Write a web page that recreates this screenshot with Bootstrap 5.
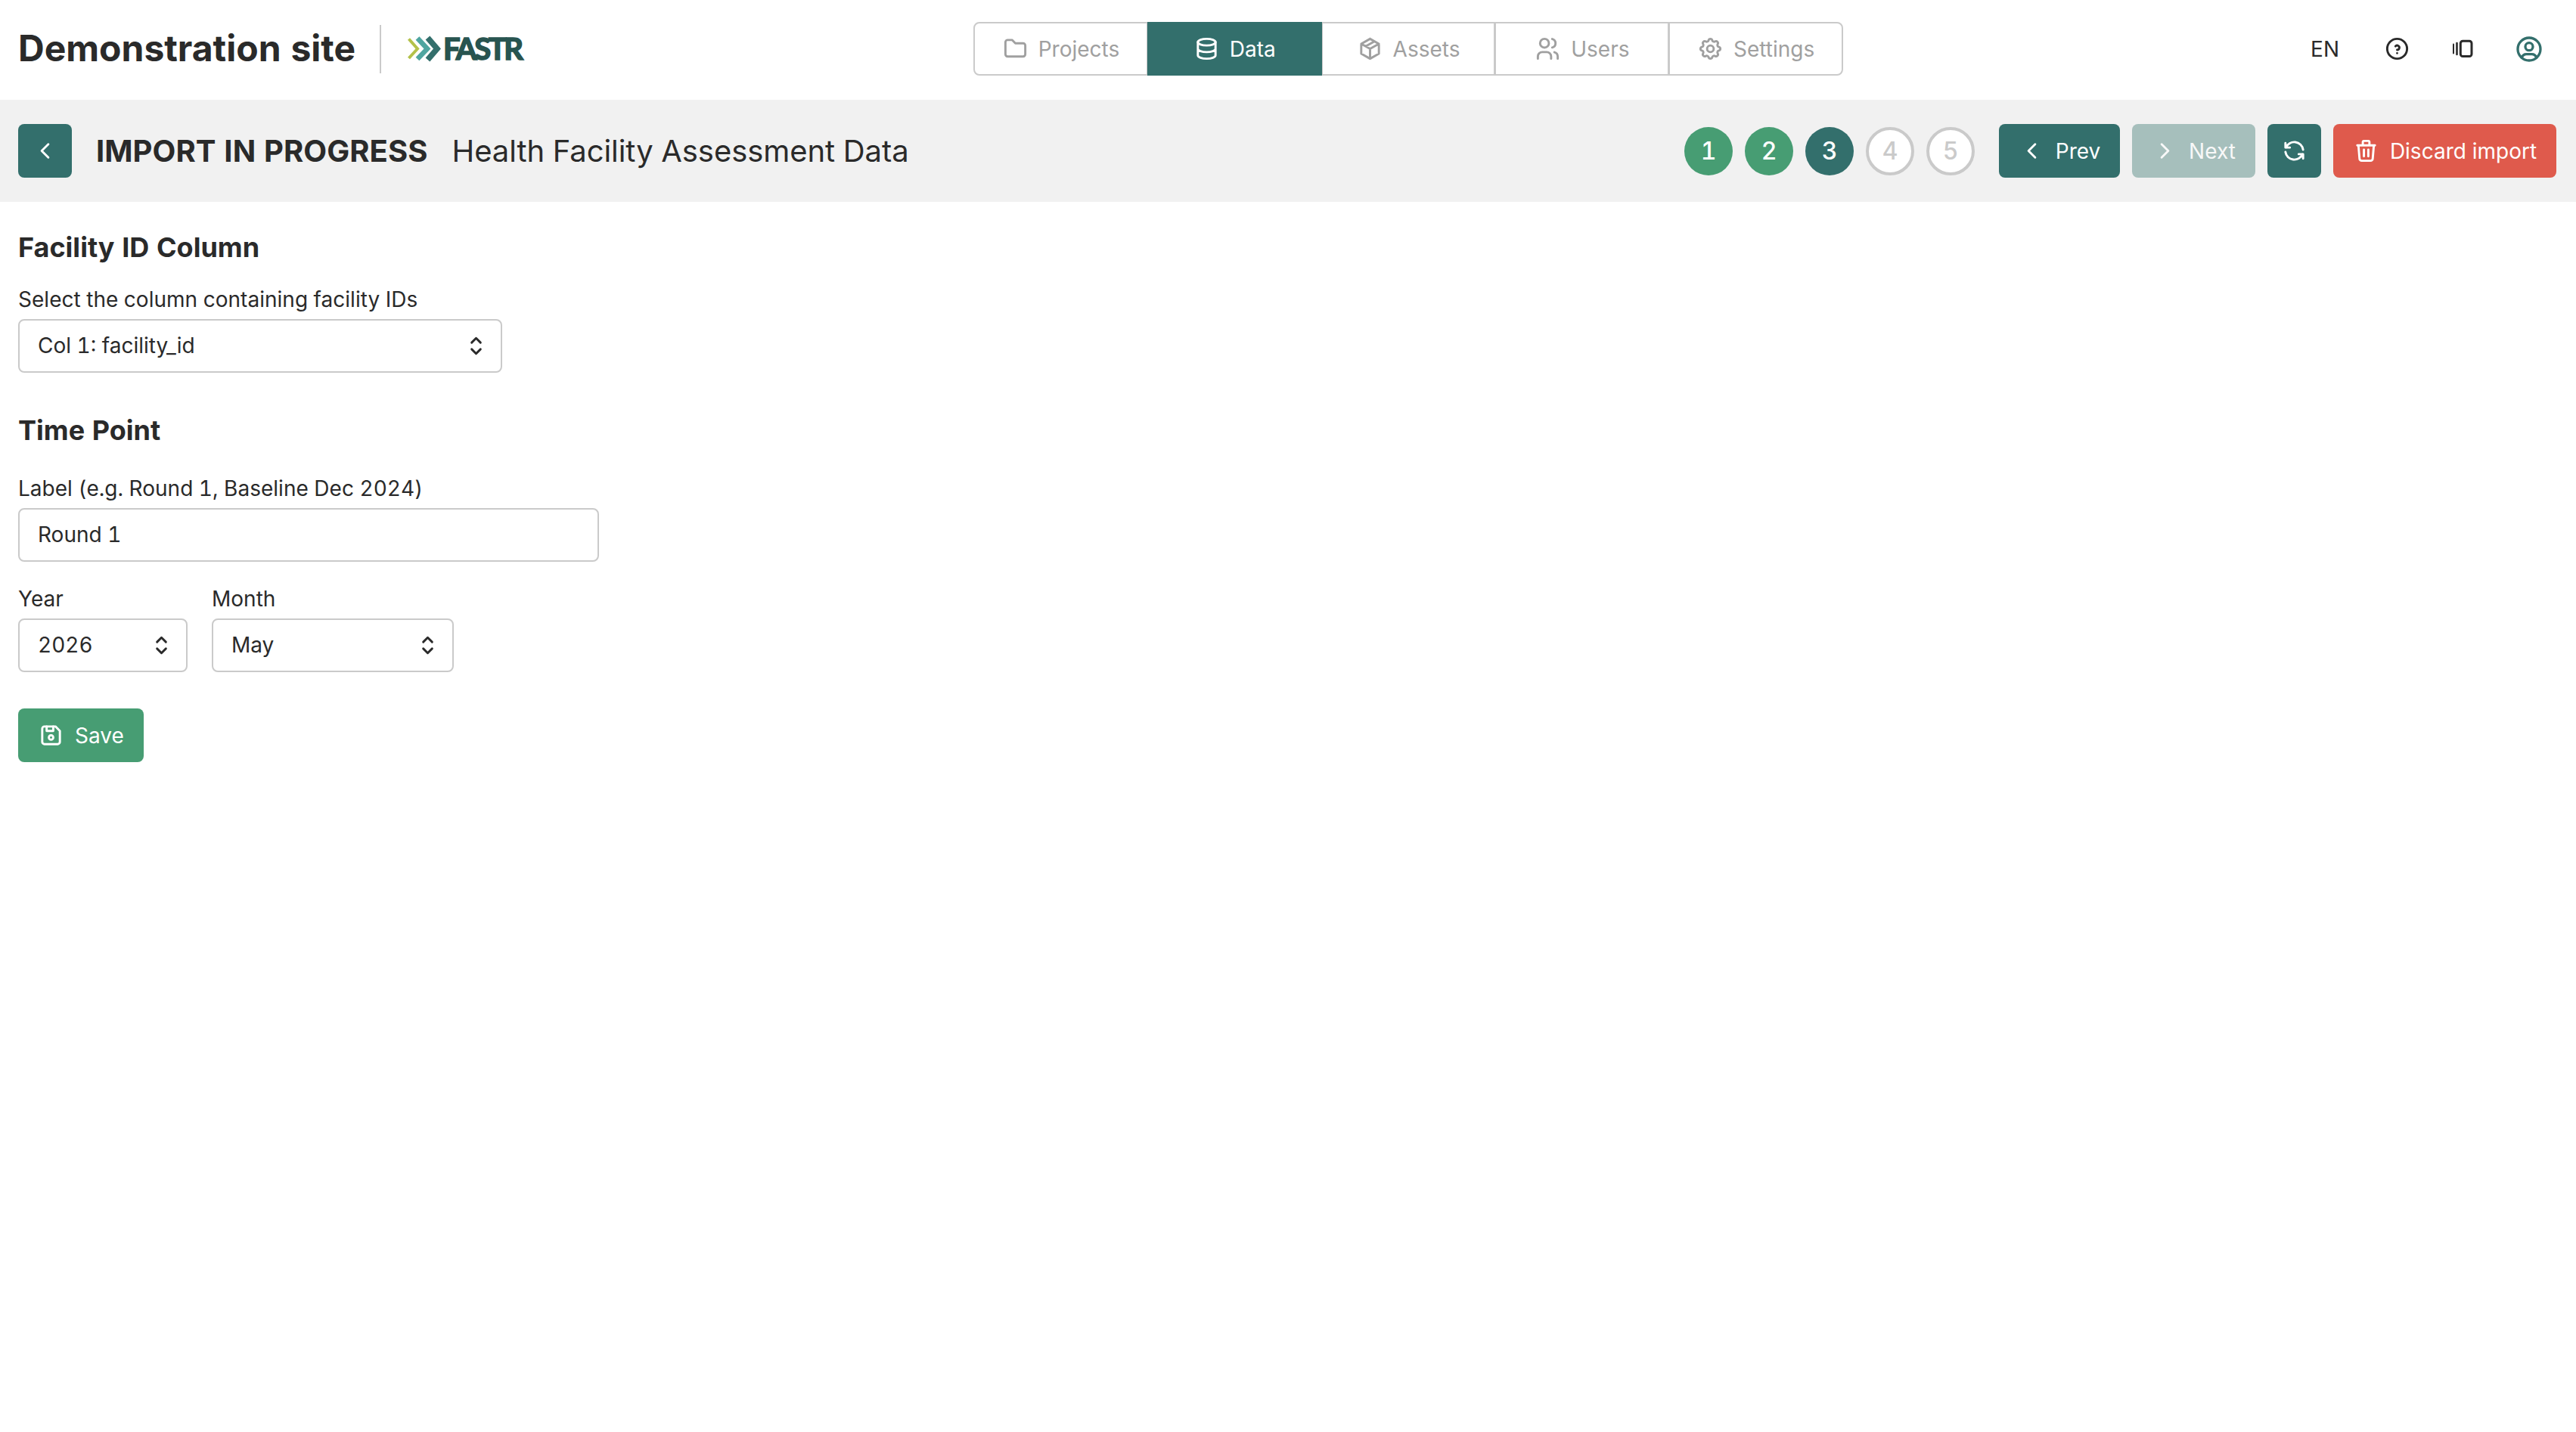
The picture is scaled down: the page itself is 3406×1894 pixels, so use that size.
<!DOCTYPE html>
<html lang="en">
<head>
<meta charset="utf-8">
<meta name="viewport" content="width=device-width, initial-scale=1">
<title>Demonstration site</title>
<link href="https://cdn.jsdelivr.net/npm/bootstrap@5.3.0/dist/css/bootstrap.min.css" rel="stylesheet">
<style>
:root{--teal:#336f6c;--green:#479d73;--red:#df5a4c;--ink:#2a2a2a;--line:#cacaca;--muted:#a0a0a0}
body{font-family:Inter,"Liberation Sans",sans-serif;font-size:28px;line-height:1.5;font-variant-numeric:tabular-nums;color:var(--ink);background:#fff}
.ico{width:35px;height:35px;fill:none;stroke:currentColor;stroke-width:2;stroke-linecap:round;stroke-linejoin:round;flex:none}
.ico-lg{width:40px;height:40px;color:var(--teal)}
.topbar{height:132px;padding:0 42px 3px 24px}
.brand-side{width:666px}
.user-side{padding-left:21px}
.user-side .ico-frames{margin:0 50px 0 52px}
.user-side .lang{margin-right:59px}
.site-name{font-size:48px;font-weight:700;line-height:60px;white-space:nowrap;padding-bottom:2px}
.rule{width:2px;height:64px;background:var(--line);margin-left:32px}
.logo{margin-left:auto;margin-right:-6px;flex:none;margin-bottom:2px}
.tabs{width:1150px;height:71px}
.tabs .btn{--bs-btn-color:var(--muted);--bs-btn-border-color:var(--line);--bs-btn-border-width:2px;--bs-btn-font-size:28px;--bs-btn-border-radius:8px;--bs-btn-active-bg:var(--teal);--bs-btn-active-border-color:var(--teal);--bs-btn-active-color:#fff;flex:1 1 0;gap:13px;padding:0}
.tabs .btn+.btn{margin-left:-2px}
.subbar{height:135px;background:#f1f1f1;padding:0 26px 0 24px}
.subbar h1{font-size:40px;font-weight:700;line-height:50px;margin:0 0 0 32px;letter-spacing:.06px}
.subbar .sub{font-size:40px;line-height:50px;margin-left:32px;letter-spacing:-.06px}
.act{height:71px;border-radius:8px;border:0;font-size:28px;color:#fff;gap:14px;padding:0;display:inline-flex;align-items:center;justify-content:center}
.act-teal{background:var(--teal)}
.act-green{background:var(--green)}
.act-red{background:var(--red)}
.act-off:disabled{background:#a6bfbc;color:#f8f8f8}
.w-sq{width:71px}.w-prev{width:160px}.w-next{width:163px}.w-disc{width:295px}.w-save{width:166px}
.steps,.acts{gap:16px}
.steps{margin-right:32px}
.step{width:64px;height:64px;border-radius:50%;font-size:32px;line-height:1;font-weight:500;color:#fff}
.step-done{background:var(--green)}
.step-now{background:var(--teal)}
.step-todo{background:#fff;border:4px solid var(--line);color:var(--line)}
.pane{padding:40px 24px}
.pane h2{font-size:36px;font-weight:700;line-height:40px;margin:0}
.lbl{line-height:40px;margin:0 0 6px;display:block;letter-spacing:.02px}
.field{height:71px;border:2px solid var(--line);border-radius:8px;font-size:28px;color:var(--ink);padding:0 15px 1px 24px;background:#fff;font-variant-numeric:inherit}
.field-col{width:640px}.field-label{width:768px}.field-year{width:224px}.field-month{width:320px}
.sec-id{margin-top:29px;margin-bottom:56px}
.sec-time{margin-top:37px}
.row-date{margin-top:29px;gap:32px}
.row-save{margin-top:48px}
</style>
</head>
<body>
<header class="topbar d-flex align-items-center justify-content-between">
  <div class="brand-side d-flex align-items-center">
    <span class="site-name">Demonstration site</span>
    <span class="rule"></span>
    <svg class="logo" width="158" height="56" viewBox="0 -10 158 56">
      <g fill="none" stroke-linejoin="miter">
        <path d="M2.5 5.5L14 18.5 2.5 31" stroke="#b3c14a" stroke-width="4"/>
        <path d="M14 4.500L27 18.500 14 32" stroke="#4fa5a0" stroke-width="6.500"/>
        <path d="M27.500 4L40 18.500 27.500 33" stroke="#336f6c" stroke-width="7.500"/>
      </g>
      <text x="48" y="33" font-size="40" font-weight="700" font-family="Lato,sans-serif" fill="#285450" stroke="#285450" stroke-width="1.600" textLength="106" lengthAdjust="spacing">FASTR</text>
    </svg>
  </div>
  <nav class="tabs btn-group">
    <button type="button" class="btn d-flex align-items-center justify-content-center"><svg class="ico" viewBox="0 0 24 24"><path d="M5 4h4l3 3h7a2 2 0 0 1 2 2v8a2 2 0 0 1-2 2H5a2 2 0 0 1-2-2V6a2 2 0 0 1 2-2"/></svg>Projects</button>
    <button type="button" class="btn active d-flex align-items-center justify-content-center"><svg class="ico" viewBox="0 0 24 24"><ellipse cx="12" cy="6" rx="8" ry="3"/><path d="M4 6v6a8 3 0 0 0 16 0V6M4 12v6a8 3 0 0 0 16 0v-6"/></svg>Data</button>
    <button type="button" class="btn d-flex align-items-center justify-content-center"><svg class="ico" viewBox="0 0 24 24"><path d="M12 3l8 4.500v9L12 21l-8-4.500v-9L12 3M12 12l8-4.500M12 12v9M12 12L4 7.500M16 5.250l-8 4.500"/></svg>Assets</button>
    <button type="button" class="btn d-flex align-items-center justify-content-center"><svg class="ico" viewBox="0 0 24 24"><circle cx="9" cy="7" r="4"/><path d="M3 21v-2a4 4 0 0 1 4-4h4a4 4 0 0 1 4 4v2M16 3.130a4 4 0 0 1 0 7.750M21 21v-2a4 4 0 0 0-3-3.850"/></svg>Users</button>
    <button type="button" class="btn d-flex align-items-center justify-content-center"><svg class="ico" viewBox="0 0 24 24"><path d="M10.325 4.317c.426-1.756 2.924-1.756 3.35 0a1.724 1.724 0 0 0 2.573 1.066c1.543-.94 3.31.826 2.37 2.37a1.724 1.724 0 0 0 1.065 2.572c1.756.426 1.756 2.924 0 3.35a1.724 1.724 0 0 0-1.066 2.573c.94 1.543-.826 3.31-2.37 2.37a1.724 1.724 0 0 0-2.572 1.065c-.426 1.756-2.924 1.756-3.35 0a1.724 1.724 0 0 0-2.573-1.066c-1.543.94-3.31-.826-2.37-2.37a1.724 1.724 0 0 0-1.065-2.572c-1.756-.426-1.756-2.924 0-3.35a1.724 1.724 0 0 0 1.066-2.573c-.94-1.543.826-3.31 2.37-2.37 1 .608 2.296.07 2.572-1.065z"/><circle cx="12" cy="12" r="3"/></svg>Settings</button>
  </nav>
  <div class="user-side d-flex align-items-center">
    <span class="lang">EN</span>
    <svg class="ico" viewBox="0 0 24 24"><circle cx="12" cy="12" r="9"/><path d="M12 16v.01M12 13a2 2 0 0 0 .914-3.782 1.980 1.980 0 0 0-2.414.483"/></svg>
    <svg class="ico ico-frames" viewBox="0 0 35 35"><rect x="14.300" y="7.200" width="14.700" height="20.300" rx="3" stroke-width="3"/><path d="M9.500 10v15" stroke-width="2.600"/><path d="M5 11.500v12" stroke-width="2"/></svg>
    <svg class="ico ico-lg" viewBox="0 0 24 24"><circle cx="12" cy="12" r="9"/><circle cx="12" cy="10" r="3"/><path d="M6.168 18.849A4 4 0 0 1 10 16h4a4 4 0 0 1 3.834 2.855"/></svg>
  </div>
</header>

<section class="subbar d-flex align-items-center">
  <button type="button" class="act act-teal w-sq"><svg class="ico" viewBox="0 0 24 24"><path d="M15 6l-6 6 6 6"/></svg></button>
  <h1>IMPORT IN PROGRESS</h1>
  <span class="sub">Health Facility Assessment Data</span>
  <div class="steps d-flex ms-auto">
    <span class="step step-done d-flex align-items-center justify-content-center">1</span>
    <span class="step step-done d-flex align-items-center justify-content-center">2</span>
    <span class="step step-now d-flex align-items-center justify-content-center">3</span>
    <span class="step step-todo d-flex align-items-center justify-content-center">4</span>
    <span class="step step-todo d-flex align-items-center justify-content-center">5</span>
  </div>
  <div class="acts d-flex">
    <button type="button" class="act act-teal w-prev"><svg class="ico" viewBox="0 0 24 24"><path d="M15 6l-6 6 6 6"/></svg>Prev</button>
    <button type="button" class="act act-off w-next" disabled><svg class="ico" viewBox="0 0 24 24"><path d="M9 6l6 6-6 6"/></svg>Next</button>
    <button type="button" class="act act-teal w-sq"><svg class="ico" viewBox="0 0 24 24"><path d="M20 11A8.100 8.100 0 0 0 4.500 9M4 5v4h4M4 13a8.100 8.100 0 0 0 15.500 2M20 19v-4h-4"/></svg></button>
    <button type="button" class="act act-red w-disc"><svg class="ico" viewBox="0 0 24 24"><path d="M4 7h16M10 11v6M14 11v6M5 7l1 12a2 2 0 0 0 2 2h8a2 2 0 0 0 2-2l1-12M9 7V4a1 1 0 0 1 1-1h4a1 1 0 0 1 1 1v3"/></svg>Discard import</button>
  </div>
</section>

<main class="pane">
  <h2>Facility ID Column</h2>
  <div class="sec-id">
    <span class="lbl">Select the column containing facility IDs</span>
    <div class="field field-col d-flex align-items-center justify-content-between" role="combobox">Col 1: facility_id<svg class="ico" viewBox="0 0 24 24"><path d="M8 9l4-4 4 4M16 15l-4 4-4-4"/></svg></div>
  </div>
  <h2>Time Point</h2>
  <div class="sec-time">
    <label class="lbl" for="tp">Label (e.g. Round 1, Baseline Dec 2024)</label>
    <input id="tp" class="field field-label d-block" type="text" value="Round 1">
    <div class="row-date d-flex">
      <div>
        <span class="lbl">Year</span>
        <div class="field field-year d-flex align-items-center justify-content-between" role="combobox">2026<svg class="ico" viewBox="0 0 24 24"><path d="M8 9l4-4 4 4M16 15l-4 4-4-4"/></svg></div>
      </div>
      <div>
        <span class="lbl">Month</span>
        <div class="field field-month d-flex align-items-center justify-content-between" role="combobox">May<svg class="ico" viewBox="0 0 24 24"><path d="M8 9l4-4 4 4M16 15l-4 4-4-4"/></svg></div>
      </div>
    </div>
    <div class="row-save d-flex">
      <button type="button" class="act act-green w-save"><svg class="ico" viewBox="0 0 24 24"><path d="M6 4h10l4 4v10a2 2 0 0 1-2 2H6a2 2 0 0 1-2-2V6a2 2 0 0 1 2-2"/><circle cx="12" cy="14" r="2"/><path d="M14 4v4H8V4"/></svg>Save</button>
    </div>
  </div>
</main>
<script src="https://cdn.jsdelivr.net/npm/bootstrap@5.3.0/dist/js/bootstrap.bundle.min.js"></script>
</body>
</html>
